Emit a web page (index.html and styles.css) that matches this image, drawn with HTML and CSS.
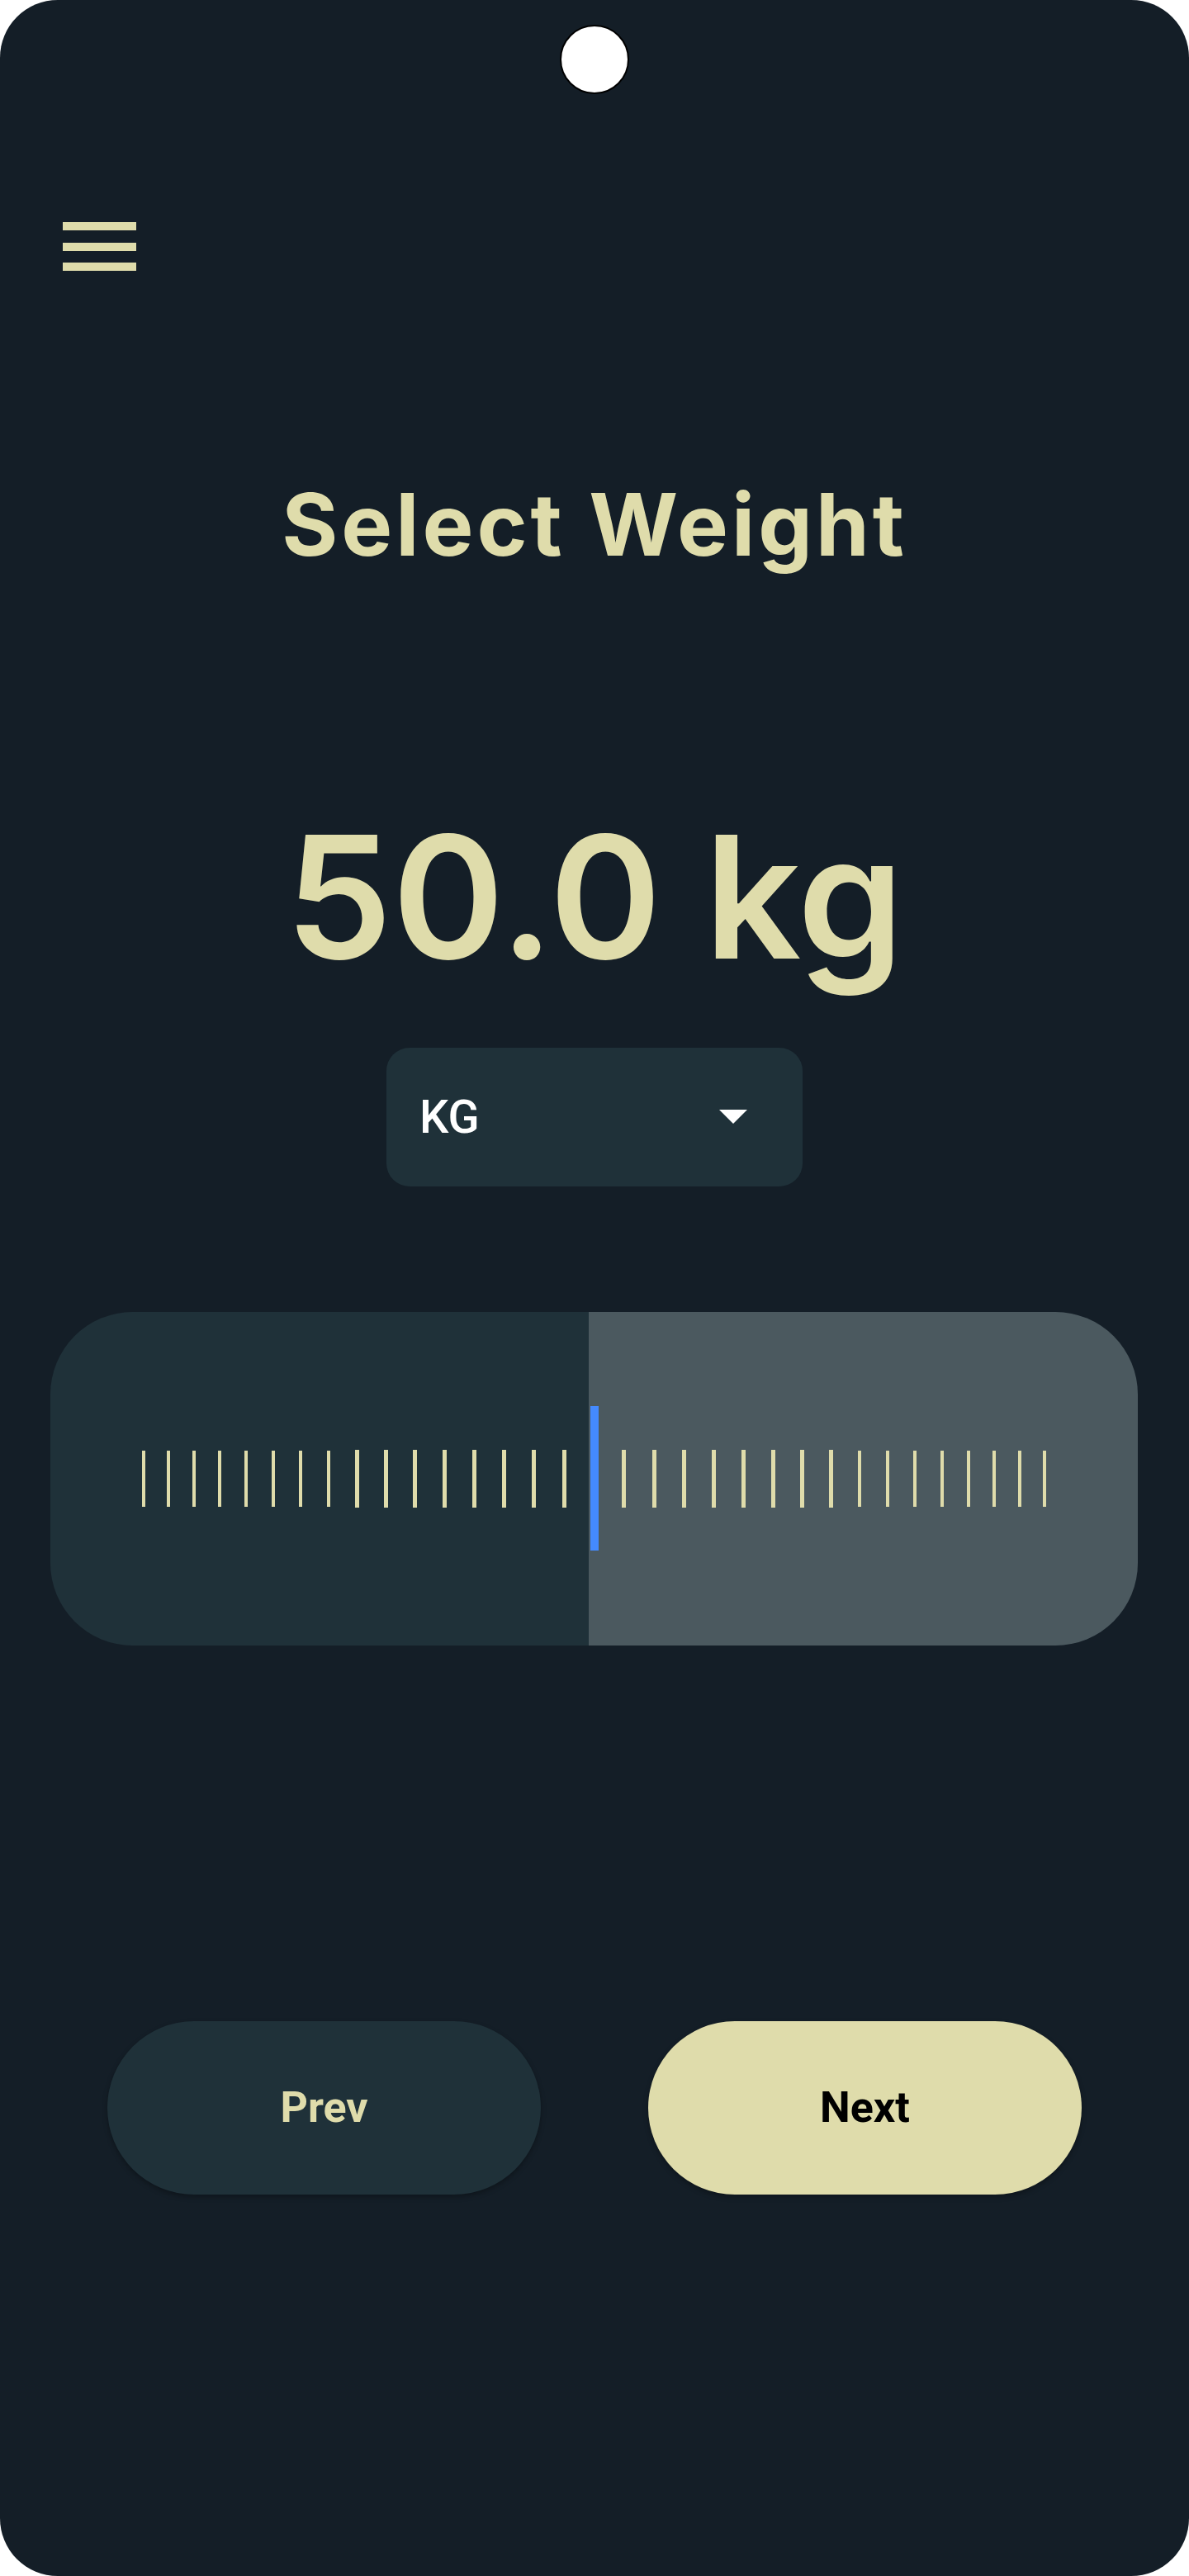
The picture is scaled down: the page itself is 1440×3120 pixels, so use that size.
FILE: index.html
```html
<!DOCTYPE html>
<html lang="en">
<head>
<meta charset="utf-8">
<title>Select Weight</title>
<link rel="stylesheet" href="styles.css">
</head>
<body>
<div class="phone">
  <div class="camera"></div>
  <header class="topbar">
    <div class="menu" aria-label="Menu">
      <span class="menu-bar"></span>
      <span class="menu-bar"></span>
      <span class="menu-bar"></span>
    </div>
  </header>

  <h1 class="title">Select Weight</h1>

  <div class="value">50.0 kg</div>

  <div class="dropdown">
    <span class="dropdown-label">KG</span>
    <span class="dropdown-arrow"></span>
  </div>

  <div class="ruler">
    <div class="ticks">
      <span class="tick thin" style="margin-right:25.89px"></span>
      <span class="tick thin" style="margin-right:26.69px"></span>
      <span class="tick thin" style="margin-right:27.44px"></span>
      <span class="tick thin" style="margin-right:28.14px"></span>
      <span class="tick thin" style="margin-right:28.78px"></span>
      <span class="tick thin" style="margin-right:29.39px"></span>
      <span class="tick thin" style="margin-right:29.93px"></span>
      <span class="tick thin" style="margin-right:29.93px"></span>
      <span class="tick" style="margin-right:29.87px"></span>
      <span class="tick" style="margin-right:30.26px"></span>
      <span class="tick" style="margin-right:30.60px"></span>
      <span class="tick" style="margin-right:30.87px"></span>
      <span class="tick" style="margin-right:31.10px"></span>
      <span class="tick" style="margin-right:31.26px"></span>
      <span class="tick" style="margin-right:31.38px"></span>
      <span class="tick" style="margin-right:28.93px"></span>
      <span class="indicator"></span>
      <span class="tick" style="margin-left:28.93px"></span>
      <span class="tick" style="margin-left:31.38px"></span>
      <span class="tick" style="margin-left:31.26px"></span>
      <span class="tick" style="margin-left:31.10px"></span>
      <span class="tick" style="margin-left:30.87px"></span>
      <span class="tick" style="margin-left:30.60px"></span>
      <span class="tick" style="margin-left:30.26px"></span>
      <span class="tick" style="margin-left:29.87px"></span>
      <span class="tick thin" style="margin-left:29.93px"></span>
      <span class="tick thin" style="margin-left:29.93px"></span>
      <span class="tick thin" style="margin-left:29.39px"></span>
      <span class="tick thin" style="margin-left:28.78px"></span>
      <span class="tick thin" style="margin-left:28.14px"></span>
      <span class="tick thin" style="margin-left:27.44px"></span>
      <span class="tick thin" style="margin-left:26.69px"></span>
      <span class="tick thin" style="margin-left:25.89px"></span>
    </div>
  </div>

  <div class="actions">
    <button class="btn btn-prev">Prev</button>
    <button class="btn btn-next">Next</button>
  </div>
</div>
</body>
</html>
```

FILE: styles.css
```css
html, body {
  margin: 0;
  padding: 0;
  background: #ffffff;
}

.phone {
  position: relative;
  width: 1440px;
  height: 3120px;
  box-sizing: border-box;
  border-radius: 70px;
  background: #141e27;
  overflow: hidden;
  display: flex;
  flex-direction: column;
  align-items: stretch;
}

.camera {
  position: absolute;
  top: 30px;
  left: 678px;
  width: 80px;
  height: 80px;
  border: 2px solid #000;
  border-radius: 50%;
  background: #fff;
}

.topbar {
  margin-top: 269px;
  padding-left: 76px;
}

.menu {
  display: flex;
  flex-direction: column;
  gap: 14.5px;
  width: 89px;
}

.menu-bar {
  display: block;
  height: 10px;
  background: #dfdcab;
}

.title {
  margin: 245px 0 0;
  text-align: center;
  font-family: Inter, "Noto Sans", sans-serif;
  font-weight: 700;
  font-size: 104px;
  line-height: 1.2;
  letter-spacing: 4px;
  color: #dfdcab;
}

.value {
  margin-top: 265px;
  text-align: center;
  font-family: Inter, "Noto Sans", sans-serif;
  font-weight: 600;
  font-size: 206px;
  line-height: 1.2;
  color: #dfdcab;
}

.dropdown {
  margin: 59px auto 0;
  width: 504px;
  height: 168px;
  box-sizing: border-box;
  padding: 0 67px 0 40px;
  border-radius: 28px;
  background: #1f3139;
  display: flex;
  align-items: center;
  justify-content: space-between;
}

.dropdown-label {
  font-family: Roboto, "Liberation Sans", sans-serif;
  font-weight: 500;
  font-size: 56px;
  color: #ffffff;
}

.dropdown-arrow {
  width: 0;
  height: 0;
  border-left: 17px solid transparent;
  border-right: 17px solid transparent;
  border-top: 17px solid #ffffff;
}

.ruler {
  margin: 152px 62px 0 61px;
  height: 404px;
  border-radius: 100px;
  background: linear-gradient(to right, #1f3139 0, #1f3139 652px, #4b595f 652px, #4b595f 100%);
  display: flex;
  align-items: center;
  justify-content: center;
}

.ticks {
  display: flex;
  align-items: center;
}

.tick {
  display: block;
  width: 5px;
  height: 70px;
  background: #dfdcab;
}

.tick.thin {
  width: 4px;
  height: 68px;
}

.indicator {
  display: block;
  width: 10px;
  height: 175px;
  background: #448aff;
}

.actions {
  margin-top: 455px;
  display: flex;
  justify-content: center;
  gap: 130px;
}

.btn {
  width: 525px;
  height: 210px;
  border: none;
  border-radius: 105px;
  font-family: Roboto, "Liberation Sans", sans-serif;
  font-weight: 700;
  font-size: 52px;
  box-shadow: 0 3px 6px rgba(0, 0, 0, 0.3);
  padding: 0;
}

.btn-prev {
  background: #1f3139;
  color: #dfdcab;
}

.btn-next {
  background: #dfdcab;
  color: #000000;
}
```
